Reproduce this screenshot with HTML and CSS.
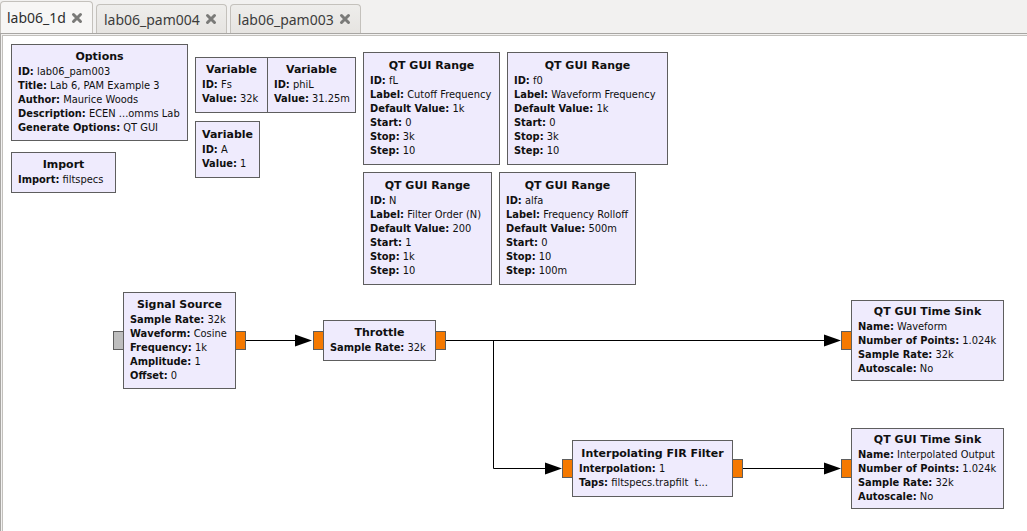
FILE: index.html
```html
<!DOCTYPE html>
<html lang="en">
<head>
  <meta charset="UTF-8">
  <title>lab06_1d - GNU Radio Companion</title>
  <link rel="stylesheet" href="styles.css">
</head>
<body>
  <div class="tabs">
    <div class="tab active">lab06_1d <svg class="close" viewBox="0 0 12 12"><path d="M2.5 2.5 L9.5 9.5 M9.5 2.5 L2.5 9.5"/></svg></div>
    <div class="tab">lab06_pam004 <svg class="close" viewBox="0 0 12 12"><path d="M2.5 2.5 L9.5 9.5 M9.5 2.5 L2.5 9.5"/></svg></div>
    <div class="tab">lab06_pam003 <svg class="close" viewBox="0 0 12 12"><path d="M2.5 2.5 L9.5 9.5 M9.5 2.5 L2.5 9.5"/></svg></div>
  </div>

  <div class="frame">
    <div class="canvas">
      <!-- connections -->
      <svg class="wires" width="1030" height="500">
        <path d="M243 304.5 H296 M443 304.5 H822 M490.5 304.5 V432.5 H543 M739 432.5 H822"/>
        <polygon points="292,298.5 309,304.5 292,310.5"/>
        <polygon points="821,298.5 838,304.5 821,310.5"/>
        <polygon points="542,426.5 559,432.5 542,438.5"/>
        <polygon points="821,426.5 838,432.5 821,438.5"/>
      </svg>

      <div class="block b-options">
        <div class="name">Options</div>
        <div class="row"><b>ID:</b> lab06_pam003</div>
        <div class="row"><b>Title:</b> Lab 6, PAM Example 3</div>
        <div class="row"><b>Author:</b> Maurice Woods</div>
        <div class="row"><b>Description:</b> ECEN ...omms Lab</div>
        <div class="row"><b>Generate Options:</b> QT GUI</div>
      </div>

      <div class="block b-import">
        <div class="name">Import</div>
        <div class="row"><b>Import:</b> filtspecs</div>
      </div>

      <div class="block b-fs">
        <div class="name">Variable</div>
        <div class="row"><b>ID:</b> Fs</div>
        <div class="row"><b>Value:</b> 32k</div>
      </div>

      <div class="block b-phil">
        <div class="name">Variable</div>
        <div class="row"><b>ID:</b> phiL</div>
        <div class="row"><b>Value:</b> 31.25m</div>
      </div>

      <div class="block b-a">
        <div class="name">Variable</div>
        <div class="row"><b>ID:</b> A</div>
        <div class="row"><b>Value:</b> 1</div>
      </div>

      <div class="block b-fl">
        <div class="name">QT GUI Range</div>
        <div class="row"><b>ID:</b> fL</div>
        <div class="row"><b>Label:</b> Cutoff Frequency</div>
        <div class="row"><b>Default Value:</b> 1k</div>
        <div class="row"><b>Start:</b> 0</div>
        <div class="row"><b>Stop:</b> 3k</div>
        <div class="row"><b>Step:</b> 10</div>
      </div>

      <div class="block b-f0">
        <div class="name">QT GUI Range</div>
        <div class="row"><b>ID:</b> f0</div>
        <div class="row"><b>Label:</b> Waveform Frequency</div>
        <div class="row"><b>Default Value:</b> 1k</div>
        <div class="row"><b>Start:</b> 0</div>
        <div class="row"><b>Stop:</b> 3k</div>
        <div class="row"><b>Step:</b> 10</div>
      </div>

      <div class="block b-n">
        <div class="name">QT GUI Range</div>
        <div class="row"><b>ID:</b> N</div>
        <div class="row"><b>Label:</b> Filter Order (N)</div>
        <div class="row"><b>Default Value:</b> 200</div>
        <div class="row"><b>Start:</b> 1</div>
        <div class="row"><b>Stop:</b> 1k</div>
        <div class="row"><b>Step:</b> 10</div>
      </div>

      <div class="block b-alfa">
        <div class="name">QT GUI Range</div>
        <div class="row"><b>ID:</b> alfa</div>
        <div class="row"><b>Label:</b> Frequency Rolloff</div>
        <div class="row"><b>Default Value:</b> 500m</div>
        <div class="row"><b>Start:</b> 0</div>
        <div class="row"><b>Stop:</b> 10</div>
        <div class="row"><b>Step:</b> 100m</div>
      </div>

      <div class="block b-source">
        <div class="port in msg p-src"></div>
        <div class="name">Signal Source</div>
        <div class="row"><b>Sample Rate:</b> 32k</div>
        <div class="row"><b>Waveform:</b> Cosine</div>
        <div class="row"><b>Frequency:</b> 1k</div>
        <div class="row"><b>Amplitude:</b> 1</div>
        <div class="row"><b>Offset:</b> 0</div>
        <div class="port out p-src"></div>
      </div>

      <div class="block b-throttle">
        <div class="port in p-thr"></div>
        <div class="name">Throttle</div>
        <div class="row"><b>Sample Rate:</b> 32k</div>
        <div class="port out p-thr"></div>
      </div>

      <div class="block b-fir">
        <div class="port in p-fir"></div>
        <div class="name">Interpolating FIR Filter</div>
        <div class="row"><b>Interpolation:</b> 1</div>
        <div class="row"><b>Taps:</b> filtspecs.trapfilt&nbsp; t...</div>
        <div class="port out p-fir"></div>
      </div>

      <div class="block b-sink1">
        <div class="port in p-sink"></div>
        <div class="name">QT GUI Time Sink</div>
        <div class="row"><b>Name:</b> Waveform</div>
        <div class="row"><b>Number of Points:</b> 1.024k</div>
        <div class="row"><b>Sample Rate:</b> 32k</div>
        <div class="row"><b>Autoscale:</b> No</div>
      </div>

      <div class="block b-sink2">
        <div class="port in p-sink"></div>
        <div class="name">QT GUI Time Sink</div>
        <div class="row"><b>Name:</b> Interpolated Output</div>
        <div class="row"><b>Number of Points:</b> 1.024k</div>
        <div class="row"><b>Sample Rate:</b> 32k</div>
        <div class="row"><b>Autoscale:</b> No</div>
      </div>
    </div>
  </div>
</body>
</html>
```

FILE: styles.css
```css
body {
  margin: 0;
  width: 1027px;
  height: 531px;
  overflow: hidden;
  background: #f2f1f0;
  font-family: "DejaVu Sans", sans-serif;
}

/* notebook tabs */
.tabs {
  display: flex;
  align-items: flex-end;
  gap: 2px;
  height: 33px;
  box-sizing: border-box;
}

.tab {
  display: flex;
  align-items: center;
  gap: 5px;
  height: 29px;
  padding: 0 9px 0 7px;
  margin-left: 1px;
  box-sizing: border-box;
  border: 1px solid #c4c1bc;
  border-bottom: none;
  border-radius: 4px 4px 0 0;
  background: linear-gradient(#eeedeb, #e6e4e1);
  font-family: "Noto Sans", sans-serif;
  font-size: 14px;
  color: #3c3c3c;
}

.tab.active {
  height: 32px;
  margin-left: 0;
  padding: 0 9px 0 6px;
  background: #f7f6f5;
  color: #2e2e2e;
}

.close {
  width: 12px;
  height: 12px;
  fill: none;
  stroke: #7a7a78;
  stroke-width: 3;
  stroke-linecap: round;
}

/* canvas with double border */
.frame {
  height: 498px;
  border-top: 1px solid #a8a6a3;
  border-left: 1px solid #a8a6a3;
  padding: 1px 0 0 1px;
  background: #f2f1f0;
}

.canvas {
  position: relative;
  height: 100%;
  border-top: 1px solid #c2c0bc;
  border-left: 1px solid #c2c0bc;
  background: #ffffff;
  overflow: hidden;
}

.wires {
  position: absolute;
  left: 0;
  top: 0;
}

.wires path {
  fill: none;
  stroke: #000000;
  stroke-width: 1;
}

.wires polygon {
  fill: #000000;
}

/* flowgraph blocks */
.block {
  position: absolute;
  box-sizing: border-box;
  display: flex;
  flex-direction: column;
  justify-content: center;
  padding: 0 0 1px 6px;
  border: 1px solid #5e5e5e;
  background: #efebfd;
  font-size: 9.9px;
  line-height: 14px;
  color: #101010;
  white-space: nowrap;
}

.block .name {
  margin: 0 0 1px -6px;
  text-align: center;
  font-weight: bold;
  font-size: 11px;
}

.block b {
  font-weight: bold;
}

.b-options  { left: 8px;   top: 8px;   width: 177px; height: 97px; }
.b-import   { left: 8px;   top: 116px; width: 105px; height: 41px; }
.b-fs       { left: 192px; top: 21px;  width: 73px;  height: 56px; }
.b-phil     { left: 264px; top: 21px;  width: 89px;  height: 56px; }
.b-a        { left: 192px; top: 85px;  width: 65px;  height: 57px; }
.b-fl       { left: 360px; top: 16px;  width: 137px; height: 113px; }
.b-f0       { left: 504px; top: 16px;  width: 161px; height: 113px; }
.b-n        { left: 360px; top: 136px; width: 129px; height: 113px; }
.b-alfa     { left: 496px; top: 136px; width: 137px; height: 113px; }
.b-source   { left: 120px; top: 256px; width: 113px; height: 97px; }
.b-throttle { left: 320px; top: 284px; width: 113px; height: 41px; }
.b-fir      { left: 569px; top: 404px; width: 161px; height: 57px; }
.b-sink1    { left: 848px; top: 264px; width: 153px; height: 81px; }
.b-sink2    { left: 848px; top: 392px; width: 153px; height: 81px; }

/* ports */
.port {
  position: absolute;
  width: 11px;
  height: 19px;
  box-sizing: border-box;
  border: 1px solid #5e5e5e;
  background: #f57900;
}

.port.in  { left: -11px; }
.port.out { right: -11px; }
.port.msg { background: #bebebe; }

.p-src  { top: 38px; }
.p-thr  { top: 10px; }
.p-fir  { top: 18px; }
.p-sink { top: 30px; }
```
